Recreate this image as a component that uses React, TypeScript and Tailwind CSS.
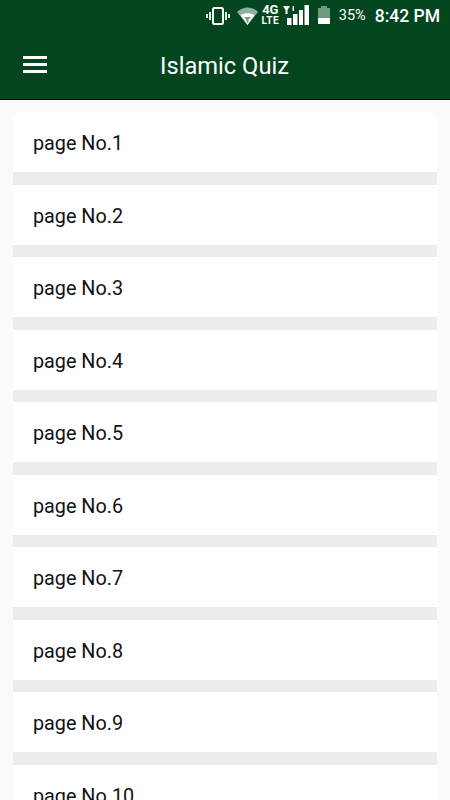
import React from "react";

const pages = [1, 2, 3, 4, 5, 6, 7, 8, 9, 10];

function StatusBar() {
  return (
    <div className="h-[32px] flex items-center justify-end text-white">
      {/* vibrate */}
      <svg width="24" height="18" viewBox="0 0 24 18" className="mr-[7px]" fill="none" stroke="white">
        <rect x="7" y="1" width="10" height="16" rx="1.5" strokeWidth="2" />
        <path d="M4 5v8M1 7v4M20 5v8M23 7v4" strokeWidth="1.8" />
      </svg>
      {/* wifi */}
      <svg width="21" height="18" viewBox="0 0 21 18" className="mr-[3px]">
        <path d="M0 5C6 -1 15 -1 21 5L10.5 18Z" fill="#8fb09c" />
        <path d="M3.5 8C8 5.5 13 5.5 17.5 8L10.5 18Z" fill="white" />
        <path d="M7 10h7l-2.5 2.5v3h-2v-3Z" fill="#6f9a80" />
      </svg>
      <div className="w-[19px] mr-[3px] mb-[2px] flex flex-col items-center font-bold">
        <span className="text-[13px] leading-[12px]">4G</span>
        <span className="text-[10px] leading-[10px] tracking-[0.5px]">LTE</span>
      </div>
      {/* signal */}
      <svg width="26" height="20" viewBox="0 0 26 20" className="mr-[9px] mb-[2px]" fill="white">
        <path d="M0 1h7L4.5 5v4h-2V5Z" />
        <path d="M9.5 1.5l1.5-.5v5H9.5Z" />
        <rect x="4" y="13" width="4.5" height="7" />
        <rect x="10" y="9" width="4.5" height="11" />
        <rect x="16" y="5" width="4" height="15" />
        <rect x="21.5" y="0" width="4.5" height="20" />
      </svg>
      {/* battery */}
      <div className="w-[12px] h-[18px] mr-[9px] mb-[2px] flex flex-col items-center">
        <div className="w-[6px] h-[2px] bg-[#6f9a80]" />
        <div className="w-[12px] h-[10px] bg-[#6f9a80]" />
        <div className="w-[12px] h-[6px] bg-white" />
      </div>
      <span className="text-[14.5px] mr-[9px]">35%</span>
      <span className="text-[17.5px] font-medium mr-[10px]">8:42 PM</span>
    </div>
  );
}

export default function App() {
  return (
    <div className="h-[800px] overflow-hidden bg-[#fafafa] font-['Roboto',sans-serif]">
      <div className="h-[100px] bg-[#03451f] border-b border-black">
        <StatusBar />
        <div className="flex items-center h-[67px]">
          <div className="ml-[23px] mb-[2px] w-[24px] flex flex-col gap-[4px]">
            <div className="h-[3px] bg-white" />
            <div className="h-[3px] bg-white" />
            <div className="h-[3px] bg-white" />
          </div>
          <h1 className="ml-[113px] mt-[2px] text-[23.7px] text-white">Islamic Quiz</h1>
        </div>
      </div>
      <div className="mx-[13px] mt-[12px]">
        {pages.map((n, i) => (
          <div key={n}>
            <div className={`h-[60px] bg-white flex items-center pl-[20px] pt-[4px] text-[19.8px] text-[#111] ${i === 0 ? "rounded-t-[8px]" : ""}`}>
              page No.{n}
            </div>
            <div className="h-[12.5px] bg-[#ececec]" />
          </div>
        ))}
      </div>
    </div>
  );
}
